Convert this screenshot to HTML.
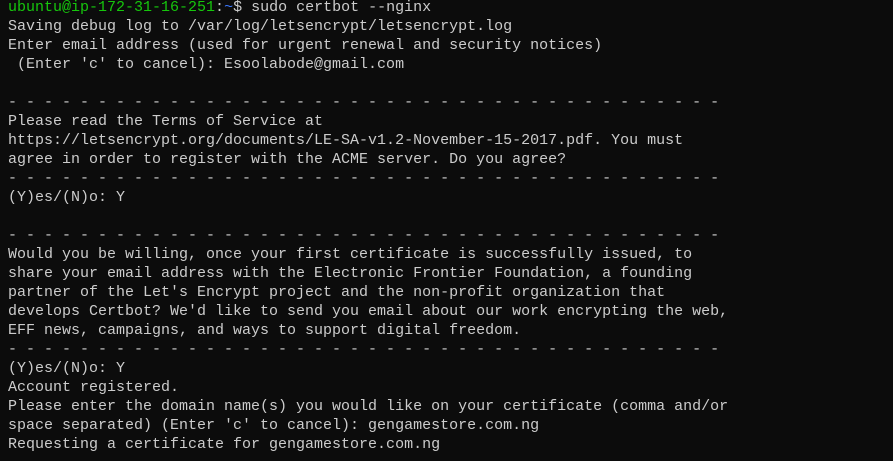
<!DOCTYPE html>
<html><head><meta charset="utf-8"><style>
html,body{margin:0;padding:0;background:#0c0c0c;width:893px;height:461px;overflow:hidden}
pre{margin:0;padding:0 0 0 8px;font-family:"Liberation Mono",monospace;font-size:15px;line-height:19px;color:#cccccc;position:relative;top:-2px;white-space:pre}
.g{color:#16c60c}.b{color:#3b78ff}
</style></head><body><pre><span class="g">ubuntu@ip-172-31-16-251</span>:<span class="b">~</span>$ sudo certbot --nginx
Saving debug log to /var/log/letsencrypt/letsencrypt.log
Enter email address (used for urgent renewal and security notices)
 (Enter 'c' to cancel): Esoolabode@gmail.com

- - - - - - - - - - - - - - - - - - - - - - - - - - - - - - - - - - - - - - - -
Please read the Terms of Service at
https://letsencrypt.org/documents/LE-SA-v1.2-November-15-2017.pdf. You must
agree in order to register with the ACME server. Do you agree?
- - - - - - - - - - - - - - - - - - - - - - - - - - - - - - - - - - - - - - - -
(Y)es/(N)o: Y

- - - - - - - - - - - - - - - - - - - - - - - - - - - - - - - - - - - - - - - -
Would you be willing, once your first certificate is successfully issued, to
share your email address with the Electronic Frontier Foundation, a founding
partner of the Let's Encrypt project and the non-profit organization that
develops Certbot? We'd like to send you email about our work encrypting the web,
EFF news, campaigns, and ways to support digital freedom.
- - - - - - - - - - - - - - - - - - - - - - - - - - - - - - - - - - - - - - - -
(Y)es/(N)o: Y
Account registered.
Please enter the domain name(s) you would like on your certificate (comma and/or
space separated) (Enter 'c' to cancel): gengamestore.com.ng
Requesting a certificate for gengamestore.com.ng</pre></body></html>
